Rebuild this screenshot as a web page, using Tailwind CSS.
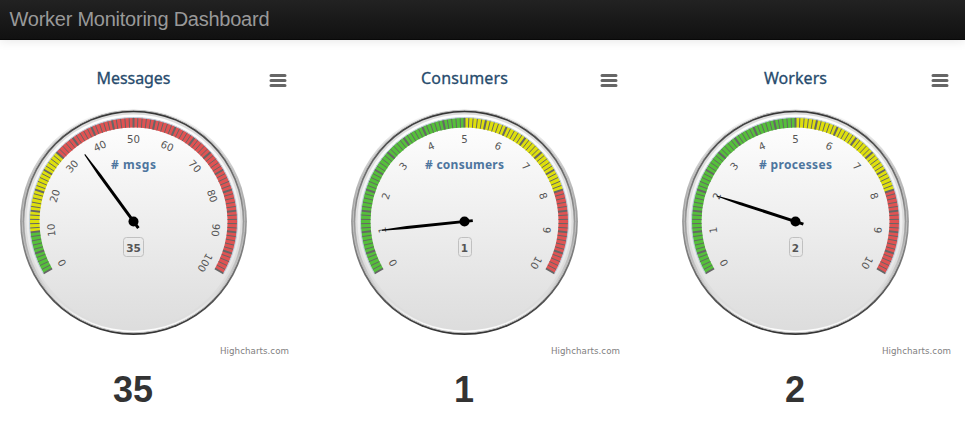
<!DOCTYPE html>
<html lang="en">
<head>
<meta charset="utf-8">
<title>Worker Monitoring Dashboard</title>
<script src="https://cdn.jsdelivr.net/npm/@tailwindcss/browser@4"></script>
</head>
<body class="bg-white w-[965px] h-[434px] overflow-hidden">
<header class="h-10 bg-linear-to-b from-[#222] to-[#111] border-b border-[#080808] shadow-[0_1px_10px_rgba(0,0,0,0.1)] pl-2.5 flex items-center">
  <h1 class="text-[#999] text-[20px] leading-5 pb-0.5 font-['Liberation_Sans',sans-serif]"><svg width="264" height="26" class="block overflow-visible"><text x="-0.5" y="20" textLength="260" fill="#999">Worker Monitoring Dashboard</text></svg></h1>
</header>
<main id="gauges" class="flex pt-[20px]"></main>
<script>
const gauges = [
  { title: 'Messages', titleWidth: 74, unit: '# msgs', unitWidth: 45, value: 35, max: 100, bands: [[0, 10, '#55BF3B'], [10, 30, '#DDDF0D'], [30, 100, '#DF5353']] },
  { title: 'Consumers', titleWidth: 87, unit: '# consumers', unitWidth: 79, value: 1, max: 10, bands: [[0, 5, '#55BF3B'], [5, 8, '#DDDF0D'], [8, 10, '#DF5353']] },
  { title: 'Workers', titleWidth: 63, unit: '# processes', unitWidth: 73, value: 2, max: 10, bands: [[0, 5, '#55BF3B'], [5, 8, '#DDDF0D'], [8, 10, '#DF5353']] }
];
const cx = 133.5, cy = 161.5, R = 104;
const point = (deg, r) => {
  const a = deg * Math.PI / 180;
  return (cx + r * Math.sin(a)).toFixed(2) + ' ' + (cy - r * Math.cos(a)).toFixed(2);
};
const arc = (a, b, color) => {
  const big = b - a > 180 ? 1 : 0;
  return `<path fill="${color}" d="M${point(a, R)}A${R} ${R} 0 ${big} 1 ${point(b, R)}L${point(b, R - 10)}A${R - 10} ${R - 10} 0 ${big} 0 ${point(a, R - 10)}Z"/>`;
};
document.getElementById('gauges').innerHTML = gauges.map((g, i) => {
  const angle = v => -120 + 240 * v / g.max;
  let ticks = '', labels = '';
  for (let k = 0; k <= 100; k++) {
    const a = -120 + k * 2.4;
    ticks += `<path stroke="#666" stroke-width="${k % 5 ? 1 : 2}" d="M${point(a, R)}L${point(a, R - 10)}"/>`;
  }
  for (let k = 0; k <= 10; k++) {
    const a = -120 + k * 24;
    labels += `<text transform="translate(${point(a, 83)}) rotate(${a})" y="4" text-anchor="middle">${k * g.max / 10}</text>`;
  }
  return `<section class="w-[331px] shrink-0">
    <svg width="300" height="300" class="block font-['Noto_Sans',sans-serif]">
      <defs>
        <linearGradient id="rim${i}" x1="0" y1="0" x2="0" y2="1"><stop offset="0" stop-color="#fff"/><stop offset="1" stop-color="#333"/></linearGradient>
        <linearGradient id="bezel${i}" x1="0" y1="0" x2="0" y2="1"><stop offset="0" stop-color="#333"/><stop offset="1" stop-color="#fff"/></linearGradient>
        <linearGradient id="face${i}" x1="0" y1="0" x2="0" y2="1"><stop offset="0" stop-color="#fff"/><stop offset="1" stop-color="#ddd"/></linearGradient>
      </defs>
      <text x="133.5" y="24" text-anchor="middle" font-size="16" textLength="${g.titleWidth}" fill="#274b6d" stroke="#274b6d" stroke-width=".3">${g.title}</text>
      <path d="M271 15.5h14M271 20.5h14M271 25.5h14" stroke="#666" stroke-width="3" stroke-linecap="round"/>
      <circle cx="${cx}" cy="${cy}" r="113.4" fill="url(#rim${i})"/>
      <circle cx="${cx}" cy="${cy}" r="111.3" fill="url(#bezel${i})" stroke="silver"/>
      <circle cx="${cx}" cy="${cy}" r="109.2" fill="#ddd"/>
      <circle cx="${cx}" cy="${cy}" r="107" fill="url(#face${i})"/>
      ${g.bands.map(b => arc(angle(b[0]), angle(b[1]), b[2])).join('')}
      ${ticks}
      <path d="M${point(-120, R)}A${R} ${R} 0 1 1 ${point(120, R)}" fill="none" stroke="#C0D0E0"/>
      <g class="font-['DejaVu_Sans',sans-serif]" font-size="10.2" fill="#555">${labels}</g>
      <text x="133.5" y="109" text-anchor="middle" font-size="12" font-weight="700" textLength="${g.unitWidth}" x-height="1" fill="#4d759e">${g.unit}</text>
      <rect x="${g.value > 9 ? 123.5 : 127.5}" y="177.5" width="${g.value > 9 ? 20 : 13}" height="19" rx="3" fill="none" stroke="silver"/>
      <text class="font-['DejaVu_Sans',sans-serif]" x="133.5" y="192" text-anchor="middle" font-size="10.5" font-weight="700" fill="#555">${g.value}</text>
      <path transform="translate(${cx} ${cy}) rotate(${angle(g.value) - 90})" d="M-8.3-1.5H58L83-.5V.5L58 1.5H-8.3Z"/>
      <circle cx="${cx}" cy="${cy}" r="5"/>
      <text class="font-['DejaVu_Sans',sans-serif]" x="289" y="294" text-anchor="end" font-size="8.7" textLength="69" fill="#808080">Highcharts.com</text>
    </svg>
    <p class="w-[266px] pt-2.5 text-center text-[36px] leading-10 font-bold text-[#333] font-['Liberation_Sans',sans-serif]">${g.value}</p>
  </section>`;
}).join('');
</script>
</body>
</html>
